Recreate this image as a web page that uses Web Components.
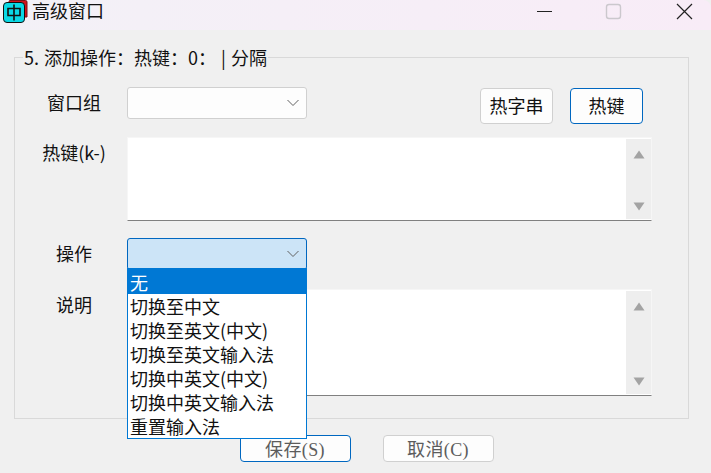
<!DOCTYPE html>
<html lang="zh-CN">

<head>
  <meta charset="UTF-8">
  <title>高级窗口</title>
  <style>
    html, body {
      margin: 0;
      height: 100%;
      background: #f0f0f0;
    }

    body {
      font: 18px "Noto Sans CJK SC", sans-serif;
      color: #111;
      overflow: hidden;
    }
  </style>
</head>

<body>
  <app-window heading="高级窗口">
    <group-box legend="5. 添加操作：热键：0： | 分隔">
      <form-row label="窗口组" height="37">
        <combo-box></combo-box>
        <div slot="extra" style="display:flex;gap:17px;margin-right:9px">
          <push-button>热字串</push-button>
          <push-button primary>热键</push-button>
        </div>
      </form-row>
      <form-row label="热键(k-)" height="84" style="margin-top:13px">
        <text-box></text-box>
      </form-row>
      <form-row label="操作" height="32" style="margin-top:17px;z-index:2">
        <combo-box focused>
          <combo-item selected>无</combo-item>
          <combo-item>切换至中文</combo-item>
          <combo-item>切换至英文(中文)</combo-item>
          <combo-item>切换至英文输入法</combo-item>
          <combo-item>切换中英文(中文)</combo-item>
          <combo-item>切换中英文输入法</combo-item>
          <combo-item>重置输入法</combo-item>
        </combo-box>
      </form-row>
      <form-row label="说明" height="107" style="margin-top:19px">
        <text-box></text-box>
      </form-row>
    </group-box>
    <div slot="footer" style="display:flex;justify-content:center;gap:32px;padding:16px 0 0 31px">
      <dialog-button primary>保存(S)</dialog-button>
      <dialog-button>取消(C)</dialog-button>
    </div>
  </app-window>

  <script>
    class AppWindow extends HTMLElement {
      constructor() {
        super();
        this.attachShadow({mode: "open"});
        const heading = this.getAttribute("heading");
        this.shadowRoot.innerHTML = `
          <style>
            :host {
              display: block;
              height: 473px;
              background: #f0f0f0;
            }
            header {
              height: 30px;
              display: flex;
              align-items: flex-start;
              background: linear-gradient(90deg, #f3f1f7, #f8ecf7);
              border-top-right-radius: 8px;
            }
            .logo { margin-left: 2px; flex: none; }
            h1 {
              margin: 0 0 0 4px;
              font: 18px/25px "Liberation Sans", "Noto Sans CJK SC", sans-serif;
              flex: 1;
            }
            .caption {
              width: 46px;
              height: 24px;
              flex: none;
              display: block;
            }
            main { padding: 27px 22px 0 14px; }
          </style>
          <header>
            <svg class="logo" width="26" height="24" viewBox="0 0 26 24">
              <path d="M7 1.500Q7 .5 8 .5H23.500Q25 .5 25 2V17H7z" fill="#d0141c" stroke="#7a1015"/>
              <rect x="1.500" y="2.500" width="21" height="20" rx="3.500" fill="#0ad8e6" stroke="#111"/>
              <path d="M6 8.500h12v7H6zM12 4.500v16" fill="none" stroke="#111" stroke-width="1.600"/>
            </svg>
            <h1>${heading}</h1>
            <svg class="caption" viewBox="0 0 46 24" style="margin-right:23px"><path d="M16 11.500h15" stroke="#222" fill="none"/></svg>
            <svg class="caption" viewBox="0 0 46 24" style="margin-right:25px"><rect x="16.500" y="4.500" width="14" height="14" rx="2.500" fill="none" stroke="#cbc8cd" stroke-width="1.400"/></svg>
            <svg class="caption" viewBox="0 0 46 24" style="margin-right:4px"><path d="M16 4l15 15M31 4l-15 15" stroke="#222" stroke-width="1.200" fill="none"/></svg>
          </header>
          <main>
            <slot></slot>
            <slot name="footer"></slot>
          </main>
        `;
      }
    }

    class GroupBox extends HTMLElement {
      constructor() {
        super();
        this.attachShadow({mode: "open"});
        this.shadowRoot.innerHTML = `
          <style>
            :host {
              display: block;
              position: relative;
              border: 1px solid #d9d9d9;
              height: 362px;
              box-sizing: border-box;
              padding-top: 29px;
            }
            .legend {
              position: absolute;
              top: -12px;
              left: 8px;
              padding: 0 1px;
              background: #f0f0f0;
              line-height: 22px;
              word-spacing: 1px;
              white-space: pre;
            }
          </style>
          <div class="legend"></div>
          <slot></slot>
        `;
        this.shadowRoot.querySelector(".legend").textContent = this.getAttribute("legend");
      }
    }

    class FormRow extends HTMLElement {
      constructor() {
        super();
        this.attachShadow({mode: "open"});
        this.shadowRoot.innerHTML = `
          <style>
            :host {
              display: grid;
              grid-template-columns: 112px 525px;
              position: relative;
              height: ${this.getAttribute("height")}px;
            }
            .label {
              display: flex;
              justify-content: center;
              line-height: 30px;
              padding-left: 6px;
            }
            .field { display: flex; justify-content: space-between; }
            ::slotted(text-box) { width: 100%; }
            ::slotted(combo-box) { width: 180px; }
            .extra { padding-top: 1px; }
          </style>
          <div class="label"></div>
          <div class="field">
            <slot></slot>
            <div class="extra"><slot name="extra"></slot></div>
          </div>
        `;
        this.shadowRoot.querySelector(".label").textContent = this.getAttribute("label");
      }
    }

    class ComboBox extends HTMLElement {
      constructor() {
        super();
        this.attachShadow({mode: "open"});
        const focused = this.hasAttribute("focused");
        this.shadowRoot.innerHTML = `
          <style>
            :host {
              display: block;
              position: relative;
              height: 32px;
              box-sizing: border-box;
              border: 1px solid ${focused ? "#0067c0" : "#d0d0d0"};
              border-radius: 3px;
              background: ${focused ? "#cce4f7" : "#fdfdfd"};
            }
            svg { position: absolute; right: 7px; top: 11px; }
            .menu {
              display: none;
              position: absolute;
              left: -1px;
              right: -1px;
              top: 29px;
              background: #fff;
              border: 1px solid #0078d4;
            }
            .menu.open { display: block; }
          </style>
          <svg width="12" height="8" viewBox="0 0 12 8"><path d="M.5 1l5.500 5.500L11.500 1" fill="none" stroke="#606060"/></svg>
          <div class="menu"><slot></slot></div>
        `;
        if (this.children.length) {
          this.shadowRoot.querySelector(".menu").classList.add("open");
        }
      }
    }

    class ComboItem extends HTMLElement {
      constructor() {
        super();
        this.attachShadow({mode: "open"});
        const selected = this.hasAttribute("selected");
        this.shadowRoot.innerHTML = `
          <style>
            :host {
              display: block;
              height: ${selected ? 25 : 24}px;
              padding-left: 2px;
              line-height: ${selected ? 26 : 24}px;
              white-space: nowrap;
              background: ${selected ? "#0078d4" : "transparent"};
              color: ${selected ? "#fff" : "#111"};
            }
          </style>
          <slot></slot>
        `;
      }
    }

    class TextBox extends HTMLElement {
      constructor() {
        super();
        this.attachShadow({mode: "open"});
        this.shadowRoot.innerHTML = `
          <style>
            :host {
              display: flex;
              justify-content: flex-end;
              box-sizing: border-box;
              height: 100%;
              background: #fff;
              border: 1px solid #f6f6f6;
              border-bottom: 1px solid #808080;
            }
            .bar {
              width: 25px;
              background: #eeeeee;
              margin: 1px 0 1px;
              display: flex;
              flex-direction: column;
              justify-content: space-between;
              align-items: center;
              padding: 11px 0 8px;
              box-sizing: border-box;
            }
          </style>
          <div class="bar">
            <svg width="12" height="9" viewBox="0 0 12 9"><path d="M6 .5L11.500 8.500H.5z" fill="#a3a3a3"/></svg>
            <svg width="12" height="9" viewBox="0 0 12 9"><path d="M.5 .5H11.500L6 8.500z" fill="#a3a3a3"/></svg>
          </div>
        `;
      }
    }

    class PushButton extends HTMLElement {
      constructor() {
        super();
        this.attachShadow({mode: "open"});
        this.shadowRoot.innerHTML = `
          <style>
            :host {
              display: flex;
              align-items: center;
              justify-content: center;
              box-sizing: border-box;
              width: 73px;
              height: 36px;
              padding-bottom: 2px;
              background: #fdfdfd;
              border: 1px solid ${this.hasAttribute("primary") ? "#0067c0" : "#d0d0d0"};
              border-radius: 4px;
            }
          </style>
          <slot></slot>
        `;
      }
    }

    class DialogButton extends HTMLElement {
      constructor() {
        super();
        this.attachShadow({mode: "open"});
        this.shadowRoot.innerHTML = `
          <style>
            :host {
              display: flex;
              align-items: center;
              justify-content: center;
              box-sizing: border-box;
              width: 111px;
              height: 27px;
              padding: 0 1px 2px 0;
              font: 18px "Liberation Serif", "Noto Sans CJK SC", serif;
              letter-spacing: .4px;
              color: #5c5c5c;
              background: #fdfdfd;
              border: 1px solid ${this.hasAttribute("primary") ? "#0067c0" : "#d0d0d0"};
              border-radius: 4px;
            }
          </style>
          <slot></slot>
        `;
      }
    }

    customElements.define("app-window", AppWindow);
    customElements.define("group-box", GroupBox);
    customElements.define("form-row", FormRow);
    customElements.define("combo-box", ComboBox);
    customElements.define("combo-item", ComboItem);
    customElements.define("text-box", TextBox);
    customElements.define("push-button", PushButton);
    customElements.define("dialog-button", DialogButton);
  </script>
</body>

</html>
